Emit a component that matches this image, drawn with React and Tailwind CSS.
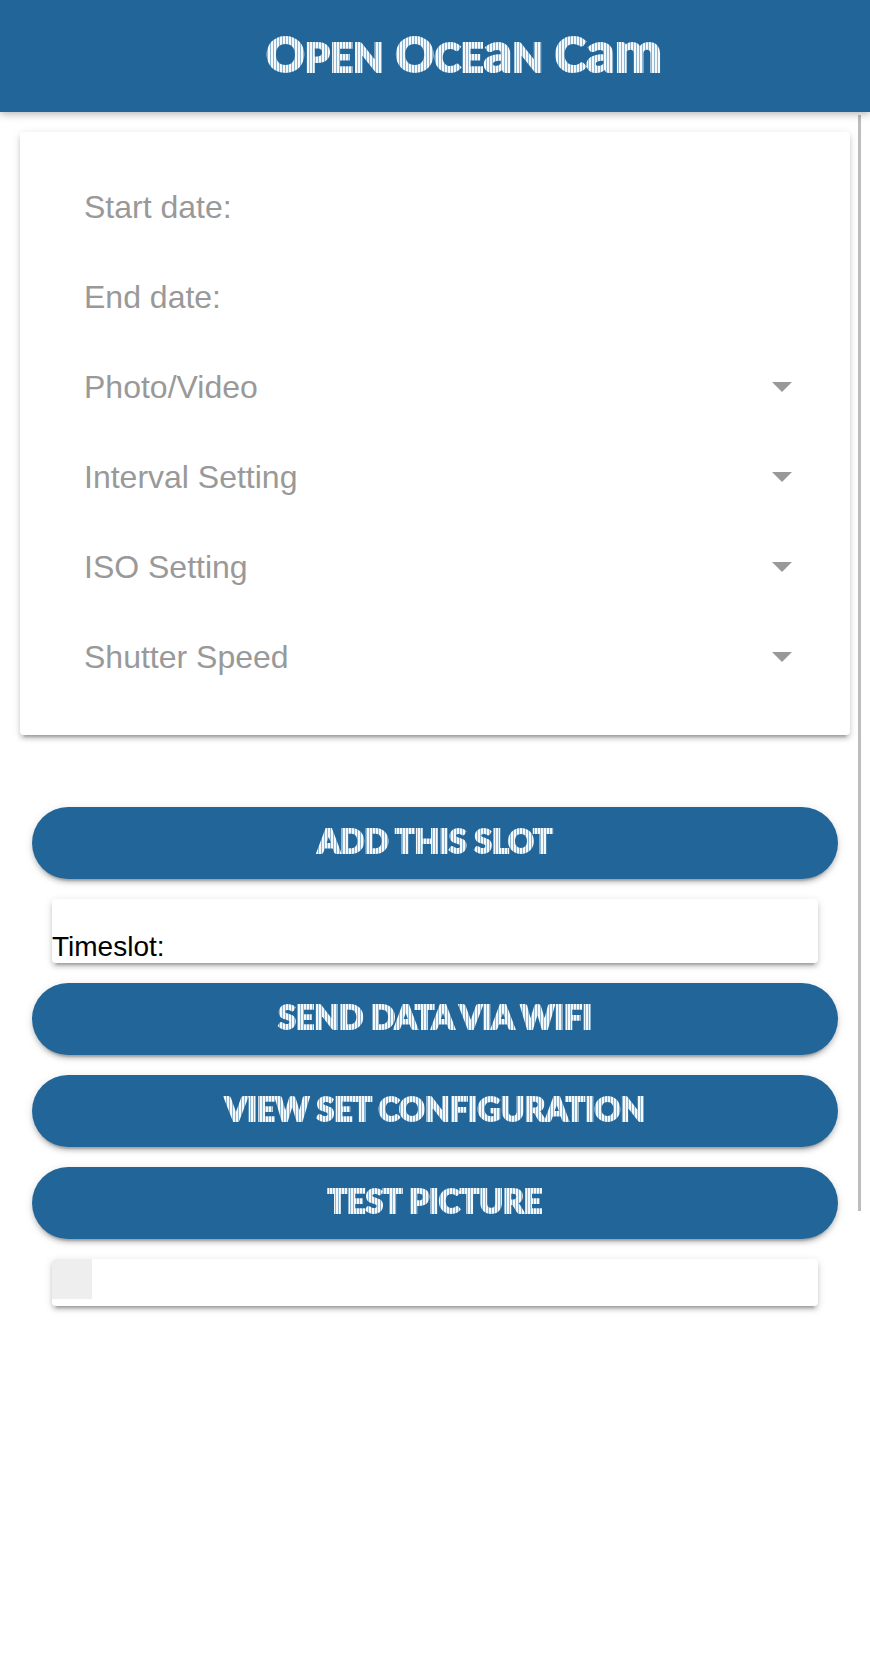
const raised =
  "shadow-[0_6px_2px_-4px_rgba(0,0,0,0.2),0_4px_4px_0_rgba(0,0,0,0.14),0_2px_10px_0_rgba(0,0,0,0.12)]";

const striped =
  "font-['Lato',sans-serif] font-black [-webkit-text-stroke:2px_transparent] bg-clip-text text-transparent bg-[repeating-linear-gradient(90deg,#f4f8fb_0px,#f4f8fb_2px,#8fb4d0_2px,#8fb4d0_3px)]";

function Field({ id, label }) {
  return (
    <div className="flex h-[90px] items-center gap-4">
      <label htmlFor={id}>{label}</label>
      <input id={id} type="text" className="h-full min-w-0 flex-1 bg-transparent outline-none" />
    </div>
  );
}

function Choice({ id, label, options }) {
  return (
    <div className="flex h-[90px] items-center gap-4">
      <label htmlFor={id}>{label}</label>
      <select id={id} defaultValue="" className="h-full min-w-0 flex-1 appearance-none bg-transparent outline-none">
        <option value=""></option>
        {options.map((option) => (
          <option key={option}>{option}</option>
        ))}
      </select>
      <svg className="pointer-events-none h-[10px] w-5 shrink-0" viewBox="0 0 20 10" aria-hidden="true">
        <path d="M0 0h20L10 10z" fill="#999999" />
      </svg>
    </div>
  );
}

function Action({ children }) {
  return (
    <button
      type="button"
      className={`flex h-[72px] items-center justify-center rounded-full bg-[#226699] pb-1 ${raised}`}
    >
      <span className={`px-1 text-[32px] leading-10 whitespace-nowrap ${striped}`}>{children}</span>
    </button>
  );
}

export default function App() {
  return (
    <div className="flex min-h-screen flex-col bg-white font-['Liberation_Sans',Arial,sans-serif]">
      <header className="z-10 flex h-28 items-center justify-center bg-[#226699] pb-1 pl-[58px] shadow-[0_2px_8px_rgba(0,0,0,0.3)]">
        <h1 className={`px-1 text-[48px] leading-[60px] whitespace-nowrap ${striped}`}>
          O<span className="text-[40px]">PEN</span> O<span className="text-[40px]">CE</span>
          <span className="text-[56px]">a</span>
          <span className="text-[40px]">N</span> C<span className="text-[56px]">am</span>
        </h1>
      </header>

      <main className="relative flex-1 px-5 pt-5">
        <form className={`rounded pt-[30px] pr-[58px] pb-[33px] pl-16 text-[32px] text-[#999999] ${raised}`}>
          <Field id="start" label="Start date:" />
          <Field id="end" label="End date:" />
          <Choice id="mode" label="Photo/Video" options={["Photo", "Video"]} />
          <Choice id="interval" label="Interval Setting" options={["5 s", "10 s", "30 s"]} />
          <Choice id="iso" label="ISO Setting" options={["100", "200", "400", "800"]} />
          <Choice id="shutter" label="Shutter Speed" options={["1/60", "1/125", "1/250"]} />
        </form>

        <div className="mt-[72px] flex flex-col gap-5 px-3">
          <Action>ADD THIS SLOT</Action>
          <section className={`mx-5 rounded bg-white pt-8 text-[28px] leading-8 text-black ${raised}`}>
            <p>Timeslot:</p>
          </section>
          <Action>SEND DATA VIA WIFI</Action>
          <Action>VIEW SET CONFIGURATION</Action>
          <Action>TEST PICTURE</Action>
          <section className={`mx-5 overflow-hidden rounded bg-white pb-[7px] ${raised}`}>
            <div className="size-10 bg-[#eeeeee]" />
          </section>
        </div>

        <div className="absolute top-[3px] right-[9px] h-[1096px] w-[3px] bg-[#bdbdbd]" />
      </main>
    </div>
  );
}
